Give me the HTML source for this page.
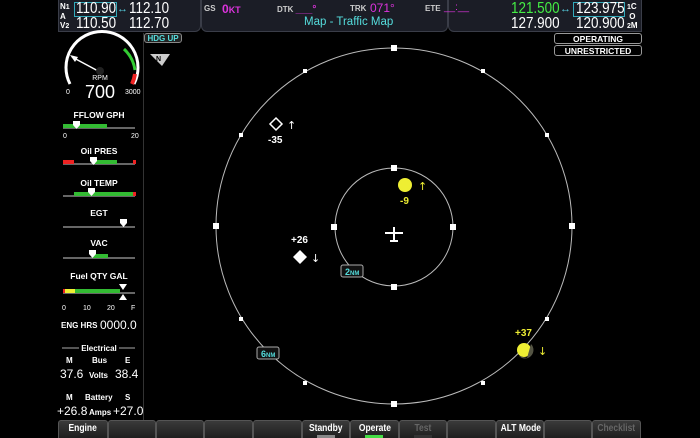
<!DOCTYPE html>
<html><head><meta charset="utf-8"><style>
*{margin:0;padding:0;box-sizing:border-box}
body{width:700px;height:438px;background:#000;overflow:hidden;position:relative;font-family:"Liberation Sans",sans-serif;color:#fff}
.abs{position:absolute;white-space:nowrap}
.n{transform:scaleX(0.84);transform-origin:0 0;font-size:16px;line-height:16px}
.bar{background:#1b1d26;border:1px solid #3a3d48;border-top:none}
.sk{position:absolute;top:420px;height:18px;background:linear-gradient(#3a3a3a,#1e1e1e);border:1px solid #555;border-bottom:none;border-radius:3px 3px 0 0;font-size:10px;font-weight:bold;text-align:center;line-height:16px;color:#fff;white-space:nowrap;overflow:hidden}
.sk span{display:inline-block;transform:scaleX(0.85)}
</style></head><body>
<div class="abs bar" style="left:58px;top:0;width:143px;height:32px;border-radius:0 0 6px 0"></div>
<div class="abs bar" style="left:201px;top:0;width:247px;height:32px;border-radius:0 0 6px 6px"></div>
<div class="abs bar" style="left:448px;top:0;width:194px;height:32px;border-radius:0 0 0 6px"></div>
<div class="abs" style="left:60px;top:2px;font-size:8px;line-height:9px;font-weight:bold">N<span style="font-size:7px">1</span><br>A<br>V<span style="font-size:7px">2</span></div>
<div class="abs" style="left:74px;top:2px;width:43px;height:15px;border:1px solid #3ab"></div>
<div class="abs n" style="left:76px;top:1px">110.90</div>
<div class="abs" style="left:117px;top:3px;color:#5cd;font-size:11px">↔</div>
<div class="abs n" style="left:129px;top:1px">112.10</div>
<div class="abs n" style="left:76px;top:16px">110.50</div>
<div class="abs n" style="left:129px;top:16px">112.70</div>
<div class="abs" style="left:204px;top:4px;font-size:8px;font-weight:bold;color:#ccc">GS</div>
<div class="abs" style="left:222px;top:2px;font-size:12px;font-weight:bold;color:#d3d">0<span style="font-size:9px">KT</span></div>
<div class="abs" style="left:277px;top:4px;font-size:8px;font-weight:bold;color:#ccc">DTK <span style="color:#d3d;font-size:10px">___°</span></div>
<div class="abs" style="left:350px;top:4px;font-size:8px;font-weight:bold;color:#ccc">TRK</div>
<div class="abs" style="left:370px;top:1px;color:#d3d;font-size:12px">071°</div>
<div class="abs" style="left:425px;top:4px;font-size:8px;font-weight:bold;color:#ccc">ETE</div>
<div class="abs" style="left:444px;top:2px;color:#d3d;font-size:10px">__:__</div>
<div class="abs" style="left:304px;top:16px;font-size:11.5px;color:#5dd">Map - Traffic Map</div>
<div class="abs" style="left:573px;top:2px;width:52px;height:15px;border:1px solid #3ab"></div>
<div class="abs n" style="left:511px;top:1px;color:#4e4">121.500</div>
<div class="abs" style="left:560px;top:3px;color:#5cd;font-size:11px">↔</div>
<div class="abs n" style="left:576px;top:1px">123.975</div>
<div class="abs n" style="left:511px;top:16px">127.900</div>
<div class="abs n" style="left:576px;top:16px">120.900</div>
<div class="abs" style="left:627px;top:2px;font-size:8px;line-height:9px;font-weight:bold"><span style="font-size:7px">1</span>C<br>&nbsp;O<br><span style="font-size:7px">2</span>M</div>
<div class="abs" style="left:554px;top:33px;width:88px;height:11px;border:1px solid #999;border-radius:3px;font-size:8.5px;font-weight:bold;text-align:center;line-height:10px">OPERATING</div>
<div class="abs" style="left:554px;top:45px;width:88px;height:11px;border:1px solid #999;border-radius:3px;font-size:8.5px;font-weight:bold;text-align:center;line-height:10px">UNRESTRICTED</div>
<div class="abs" style="left:144px;top:33px;width:38px;height:10px;border:1px solid #888;border-radius:3px;background:#222;font-size:8px;font-weight:bold;color:#5dd;text-align:center;line-height:9px">HDG UP</div>
<div class="abs" style="left:143px;top:33px;width:1px;height:387px;background:#333"></div>

<svg class="abs" style="left:0;top:0" width="700" height="438">
<polygon points="150,54 170,54 162,66" fill="#ccc"/><text x="156" y="61" font-size="7" font-weight="bold" fill="#000" font-family="Liberation Sans">N</text>
<path d="M70,84 A36,36 0 1 1 134,84" fill="none" stroke="#fff" stroke-width="3"/>
<path d="M124,49 A36,36 0 0 1 135,70" fill="none" stroke="#3c3" stroke-width="3"/>
<path d="M135,74 A36,36 0 0 1 132,84" fill="none" stroke="#e22" stroke-width="4"/>
<line x1="100" y1="72" x2="72" y2="57" stroke="#fff" stroke-width="1.5"/><polygon points="70,55 78,57 75,62" fill="#fff"/>
<circle cx="100" cy="71" r="4" fill="#222"/>
<text x="100" y="80" font-size="7" fill="#fff" text-anchor="middle" font-family="Liberation Sans">RPM</text>
<text x="100" y="98" font-size="18" fill="#fff" text-anchor="middle" font-family="Liberation Sans">700</text>
<text x="66" y="94" font-size="7" fill="#fff" font-family="Liberation Sans">0</text>
<text x="125" y="94" font-size="7" fill="#fff" font-family="Liberation Sans">3000</text>
<g font-family="Liberation Sans" font-size="8.5" font-weight="bold" fill="#fff" text-anchor="middle">
<text x="99" y="118">FFLOW GPH</text><text x="99" y="154">Oil PRES</text><text x="99" y="186">Oil TEMP</text>
<text x="99" y="216">EGT</text><text x="99" y="246">VAC</text><text x="99" y="279">Fuel QTY GAL</text>
</g>
<g stroke="#ccc" stroke-width="1">
<line x1="63" y1="128" x2="135" y2="128"/><line x1="63" y1="164" x2="135" y2="164"/><line x1="63" y1="196" x2="135" y2="196"/>
<line x1="63" y1="227" x2="135" y2="227"/><line x1="63" y1="258" x2="135" y2="258"/><line x1="63" y1="293" x2="135" y2="293"/>
</g>
<rect x="63" y="124" width="44" height="4" fill="#3b3"/>
<rect x="63" y="160" width="11" height="4" fill="#e22"/><rect x="95" y="160" width="22" height="4" fill="#3b3"/><rect x="133" y="160" width="3" height="4" fill="#e22"/>
<rect x="74" y="192" width="60" height="4" fill="#3b3"/><rect x="133" y="192" width="3" height="4" fill="#e22"/>
<rect x="92" y="254" width="16" height="4" fill="#3b3"/>
<rect x="63" y="289" width="2" height="4" fill="#e22"/><rect x="65" y="289" width="10" height="4" fill="#ee3"/><rect x="75" y="289" width="45" height="4" fill="#3b3"/>
<path d="M73,121h7v4l-3.5,4l-3.5,-4z M90,157h7v4l-3.5,4l-3.5,-4z M88,188h7v4l-3.5,4l-3.5,-4z M89,250h7v4l-3.5,4l-3.5,-4z M120,219h7v4l-3.5,4l-3.5,-4z" fill="#fff"/>
<path d="M119,284h8l-4,6z M119,300h8l-4,-6z" fill="#fff"/>
<g font-family="Liberation Sans" font-size="7" fill="#fff">
<text x="63" y="138">0</text><text x="131" y="138">20</text>
<text x="62" y="310">0</text><text x="83" y="310">10</text><text x="107" y="310">20</text><text x="131" y="310">F</text>
</g>
<g font-family="Liberation Sans" fill="#fff" font-weight="bold">
<text x="61" y="328" font-size="8">ENG HRS</text><text x="100" y="329" font-size="12" font-weight="normal">0000.0</text>
<text x="99" y="351" font-size="8" text-anchor="middle">Electrical</text>
<line x1="62" y1="348" x2="79" y2="348" stroke="#aaa"/><line x1="119" y1="348" x2="135" y2="348" stroke="#aaa"/>
<text x="66" y="363" font-size="8">M</text><text x="92" y="363" font-size="8">Bus</text><text x="125" y="363" font-size="8">E</text>
<text x="60" y="378" font-size="12" font-weight="normal">37.6</text><text x="89" y="378" font-size="8">Volts</text><text x="115" y="378" font-size="12" font-weight="normal">38.4</text>
<text x="66" y="400" font-size="8">M</text><text x="85" y="400" font-size="8">Battery</text><text x="125" y="400" font-size="8">S</text>
<text x="57" y="415" font-size="12" font-weight="normal">+26.8</text><text x="89" y="415" font-size="8">Amps</text><text x="113" y="415" font-size="12" font-weight="normal">+27.0</text>
</g>
<circle cx="394" cy="226" r="178" fill="none" stroke="#bbb" stroke-width="1"/>
<circle cx="394" cy="227" r="59" fill="none" stroke="#bbb" stroke-width="1"/>
<g fill="#fff">
<rect x="391" y="45" width="6" height="6"/><rect x="391" y="401" width="6" height="6"/><rect x="213" y="223" width="6" height="6"/><rect x="569" y="223" width="6" height="6"/>
<rect x="391" y="165" width="6" height="6"/><rect x="391" y="284" width="6" height="6"/><rect x="331" y="224" width="6" height="6"/><rect x="450" y="224" width="6" height="6"/>
<rect x="481" y="69" width="4" height="4"/><rect x="545" y="133" width="4" height="4"/><rect x="545" y="317" width="4" height="4"/><rect x="481" y="381" width="4" height="4"/>
<rect x="303" y="69" width="4" height="4"/><rect x="239" y="133" width="4" height="4"/><rect x="239" y="317" width="4" height="4"/><rect x="303" y="381" width="4" height="4"/>
</g>
<path d="M394,227v15M385,233h18M390,241h8" stroke="#fff" stroke-width="2"/>
<rect x="341" y="265" width="22" height="12" rx="2" fill="#111" stroke="#aaa"/><text x="345" y="275" font-size="9" fill="#5dd" font-family="Liberation Sans" font-weight="bold">2<tspan font-size="6">NM</tspan></text>
<rect x="257" y="347" width="22" height="12" rx="2" fill="#111" stroke="#aaa"/><text x="261" y="357" font-size="9" fill="#5dd" font-family="Liberation Sans" font-weight="bold">6<tspan font-size="6">NM</tspan></text>
<polygon points="276,118 282,124 276,130 270,124" fill="none" stroke="#fff" stroke-width="1.5"/>
<text x="287" y="129" font-size="11" fill="#fff" font-family="DejaVu Sans">↑</text>
<text x="268" y="143" font-size="10" fill="#fff" font-weight="bold" font-family="Liberation Sans">-35</text>
<polygon points="300,250 307,257 300,264 293,257" fill="#fff"/>
<text x="311" y="262" font-size="11" fill="#fff" font-family="DejaVu Sans">↓</text>
<text x="291" y="243" font-size="10" fill="#fff" font-weight="bold" font-family="Liberation Sans">+26</text>
<circle cx="405" cy="185" r="7" fill="#ee3"/>
<text x="418" y="190" font-size="11" fill="#ee3" font-family="DejaVu Sans">↑</text>
<text x="400" y="204" font-size="10" fill="#ee3" font-weight="bold" font-family="Liberation Sans">-9</text>
<circle cx="524" cy="350" r="7" fill="#ee3"/><path d="M519,356 A7,7 0 0 0 531,344 L527,358z" fill="#554"/>
<text x="538" y="355" font-size="11" fill="#ee3" font-family="DejaVu Sans">↓</text>
<text x="515" y="336" font-size="10" fill="#ee3" font-weight="bold" font-family="Liberation Sans">+37</text>
</svg>

<div class="sk" style="left:58px;width:50px"><span>Engine</span></div>
<div class="sk" style="left:108px;width:48px"></div>
<div class="sk" style="left:156px;width:48px"></div>
<div class="sk" style="left:204px;width:49px"></div>
<div class="sk" style="left:253px;width:49px"></div>
<div class="sk" style="left:302px;width:48px"><span>Standby</span><div style="position:absolute;left:14px;bottom:0;width:18px;height:3px;background:#888"></div></div>
<div class="sk" style="left:350px;width:49px"><span>Operate</span><div style="position:absolute;left:14px;bottom:0;width:18px;height:3px;background:#4d4"></div></div>
<div class="sk" style="left:399px;width:48px;color:#666"><span>Test</span><div style="position:absolute;left:14px;bottom:0;width:18px;height:3px;background:#333"></div></div>
<div class="sk" style="left:447px;width:49px"></div>
<div class="sk" style="left:496px;width:48px"><span>ALT Mode</span></div>
<div class="sk" style="left:544px;width:48px"></div>
<div class="sk" style="left:592px;width:49px;color:#666"><span>Checklist</span></div>
</body></html>
